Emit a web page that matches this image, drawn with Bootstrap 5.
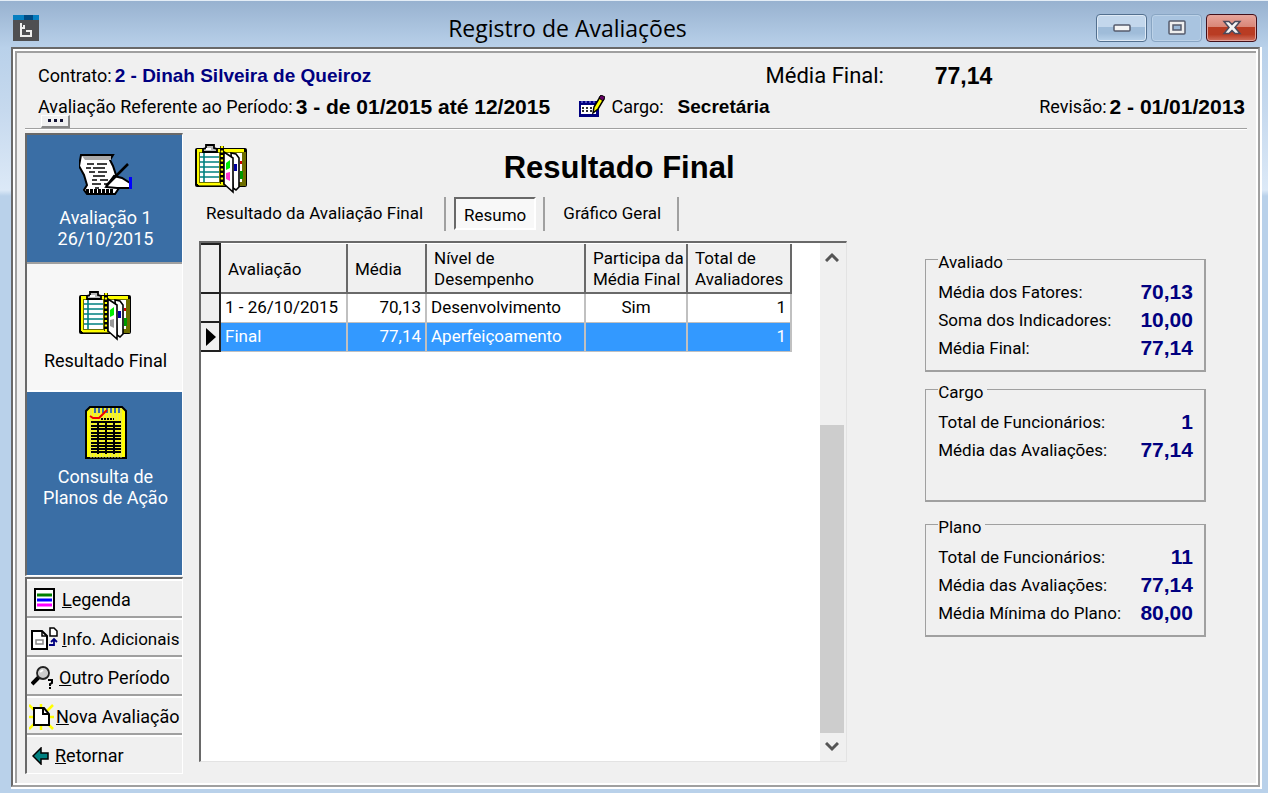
<!DOCTYPE html>
<html lang="pt-BR">
<head>
<meta charset="utf-8">
<meta name="viewport" content="width=device-width, initial-scale=1">
<title>Registro de Avaliações</title>
<link href="https://cdn.jsdelivr.net/npm/bootstrap@5.3.0/dist/css/bootstrap.min.css" rel="stylesheet">
<style>
:root{--face:#f0f0f0;--line:#a0a0a0;--dark:#696969;--navy:#000080;--side:#3a6ea5;--sel:#3399ff}
body{font-family:Roboto,"Liberation Sans",sans-serif;font-size:17px;line-height:20px;color:#000;background:linear-gradient(#97b1cf 0,#b9d1ea 48px,#c6d9ee 110px,#dce9f7 190px,#b9d1ea 196px)}
svg{display:block;flex:none}
b,h1{font-family:"Liberation Sans",sans-serif;font-weight:700}
.frame{min-height:100vh;padding:0 8px 6px 11px;border-top:1px solid #e4edf6}
.titlebar{height:46px;padding:0 3px 0 2px}
.appicon{margin-top:14px}
.caption{font-family:"Open Sans",sans-serif;font-size:23px;line-height:30px;padding-top:12px}
.winbtns{gap:4px;padding-top:13px}
.winbtn{width:51px;height:28px;padding:0;border:1px solid #53708f;border-radius:4px;box-shadow:inset 0 0 0 1px #dfeaf6;background:linear-gradient(#c3d7ec 0 46%,#9fbcd9 47% 70%,#b9d2ea);display:flex;align-items:center;justify-content:center}
.winbtn.dim{border-color:#88a5c3;box-shadow:inset 0 0 0 1px #bcd2e8;background:#a9c4e0}
.winbtn.shut{border-color:#43101a;box-shadow:inset 0 0 0 1px #e3a49c;background:linear-gradient(#e8a59b,#d98677 46%,#b93c23 47% 75%,#d1715f)}
.client{border:2px solid var(--dark);border-right-color:var(--line);border-bottom-color:var(--line);outline:2px solid #fff;outline-offset:-4px;background:var(--face);padding:2px;box-shadow:1px 1px 0 1px #fff}
.inner{border:2px solid var(--line);border-right:0;border-bottom:0;padding:10px 9px 9px 8px}
.heads{display:grid;grid-template-columns:540fr 187fr 169fr 310fr;align-content:start;padding:0 2px 0 13px;row-gap:5px;height:65px;font-size:18px}
.heads>div{line-height:26px;display:flex;align-items:center;white-space:nowrap;gap:3px}
.heads b{font-size:19px}
.heads .job{grid-column:span 2;gap:6px}
.heads .big{font-size:22px}
.heads .num,.grp dd{font-family:"Liberation Sans",sans-serif;font-weight:700;font-size:21px}
.heads .num.big{font-size:23px}
.navy{color:var(--navy)}
.dots{position:absolute;left:16px;top:52px;width:29px;height:13px;padding:0;border:1px solid #fff;border-right:2px solid #888;border-bottom:2px solid #888;background:var(--face);display:flex;align-items:center;justify-content:center}
.rule{height:2px;border-bottom:1px solid #fff;background:var(--line)}
.side{width:158px;padding-top:3px}
.sidebox{border:1px solid var(--line);border-top:2px solid var(--dark);border-left:2px solid var(--dark);border-right-color:#fff;border-bottom-color:#fff}
.tile{border:0;border-radius:0;border-bottom:2px solid var(--line);background:var(--side);color:#fff;width:100%;font-size:18px;line-height:21px;height:129px;padding:0 0 0 2px;display:flex;flex-direction:column;align-items:center;justify-content:flex-start}
.tile.on{background:#f7f7f7;color:#000;border-bottom-color:#fff;height:128px}
.tile.tall{height:auto;flex-grow:1;border:0}
.act{height:39px;width:100%;border:0;border-bottom:2px solid var(--line);border-top:2px solid #fff;background:var(--face);padding:2px 0 0 4px;display:flex;align-items:center;gap:6px;font-size:18px;line-height:20px;white-space:nowrap;text-align:left;color:#000}
.act.tight{font-size:17px;gap:4px}
.act:last-child{border-bottom:0;height:38px}
.main{padding:14px 0 12px 12px;display:grid;grid-template-columns:651fr 399fr;grid-template-rows:auto auto 1fr}
.htitle{font-size:31px;line-height:36px;padding:6px 0 0 143px;margin:0}
.tabs{height:34px;margin-top:3px}
.tabs button{border:0;background:none;color:#000;padding:0 21px 2px 11px;height:34px;border-right:2px solid var(--line);white-space:nowrap}
.tabs .on{background:#f8f8f8;border:2px solid var(--dark);border-right-color:#fff;border-bottom-color:#fff;padding:2px 8px 0;margin:0 7px 0 8px;height:33px}
.tabs .end{padding:0 16px 2px 18px}
.tabs .sep{width:2px;height:34px;background:var(--line)}
.sheet{margin:10px 0 0 4px;background:#fff;border:1px solid #e3e3e3;border-top:2px solid var(--dark);border-left:2px solid var(--dark);min-height:0}
.gridtab{table-layout:fixed;width:590px;border-collapse:collapse;line-height:21px}
.gridtab th{font-weight:400;background:var(--face);border:2px solid var(--dark);border-top:0;height:49px;padding:2px 0 0 7px;vertical-align:middle;white-space:nowrap}
.gridtab td{height:29px;padding:0 4px;border:1px solid silver;border-right-width:2px;white-space:nowrap}
.gridtab .ind,.gridtab tbody th{background:var(--face);border:2px solid #222;border-left:0;padding:0;height:29px}
.gridtab .cur td{background:var(--sel);color:#fff}
.c0{width:19px}.c1{width:127px}.c2{width:79px}.c3{width:159px}.c4{width:102px}.c5{width:104px}
.bar{width:26px;background:var(--face)}
.bar button{border:0;background:none;height:28px;width:24px;padding:0;display:flex;align-items:center;justify-content:center}
.track{flex:154}
.thumb{flex:307;width:24px;background:#cdcdcd}
.boxes{grid-row:1/4;grid-column:2;padding:102px 41px 0 78px}
.grp{border:2px solid var(--line);border-width:1px 2px 2px 1px;min-height:126px;padding:6px 11px 0 12px;margin:0 0 4px;min-width:0}
.grp.low{margin-bottom:9px}
.grp legend{font-size:17px;line-height:20px;padding:6px 4px 0 0;margin:0}
.grp dl{margin:0}
.grp dt,.grp dd{font-weight:400;line-height:28px;margin:0;white-space:nowrap}
.grp dd{font-weight:700;color:var(--navy)}
</style>
</head>
<body>
<svg width="0" height="0" class="position-absolute" aria-hidden="true">
  <symbol id="notebook" viewBox="0 0 53 50">
    <rect x="0" y="4" width="52" height="39" rx="2" fill="#000"/>
    <path d="M2 5h47v35H2z" fill="#ff0"/><path d="M4 8h47v34H4z" fill="#6e6e00"/><path d="M3 40h25" stroke="#ff0" stroke-width="2"/>
    <path d="M5 9h19v29H5zM31 9h16v29H31z" fill="#fff"/>
    <path d="M5 13h19M5 18h19M5 23h19M5 28h19M5 33h19M9 9v29" stroke="#008080" stroke-width="1.600"/>
    <path d="M8 8V5l3-1V1h8v3l3 1v3z" fill="#bbb" stroke="#000" stroke-width="1.800"/><path d="M11 5h5" stroke="#fff" stroke-width="2"/>
    <path d="M27 2v38" stroke="#000" stroke-width="4"/><path d="M27 2v38" stroke="#ff0" stroke-width="2.500" stroke-dasharray="2 2.500"/>
    <path d="M36 9l5 1 3 4v29l-3 3-3-2z" fill="#fff" stroke="#000" stroke-width="1.600"/>
    <path d="M29 8l9 6v34l-9-8z" fill="#fff" stroke="#000" stroke-width="1.600"/>
    <path d="M31 19l4-3v8l-4 2z" fill="#0e0"/><path d="M31 29l4-1v9l-4-2z" fill="currentColor"/><path d="M39 20h3v7h-3z" fill="#0000a0"/><path d="M45 17h2v3h-2z" fill="#c00"/><path d="M45 27h3v8h-3z" fill="#090"/>
  </symbol>
</svg>
<main class="frame d-flex flex-column">
  <header class="titlebar d-flex">
    <svg class="appicon" width="26" height="26" viewBox="0 0 26 26"><path d="M0 0h26v26H0z" fill="#4f4f52"/><path d="M0 0h26v5H0z" fill="#067ec0"/><path d="M11 0h9v5h-9z" fill="#004b84"/><path d="M8 8v13h10v-5h-5" fill="none" stroke="#eee" stroke-width="2"/><path d="M7 13h4v-3" fill="none" stroke="#eee" stroke-width="2"/></svg>
    <div class="caption flex-grow-1 text-center">Registro de Avaliações</div>
    <div class="winbtns d-flex">
      <button class="winbtn" aria-label="Minimizar"><svg width="18" height="8"><rect x="1" y="1" width="16" height="6" rx="1" fill="#f4f4f4" stroke="#555b6c" stroke-width="1.500"/></svg></button>
      <button class="winbtn dim" aria-label="Maximizar"><svg width="18" height="16"><rect x="1" y="1" width="16" height="13" rx="1" fill="#eee" stroke="#555b6c" stroke-width="1.500"/><rect x="5" y="5" width="8" height="5" fill="#9bb9d8" stroke="#555b6c" stroke-width="1.500"/></svg></button>
      <button class="winbtn shut" aria-label="Fechar"><svg width="20" height="16"><path d="M2 1.500h5l3 3 3-3h5l-5 6 5 6h-5l-3-3-3 3H2l5-6z" fill="#f4f4f4" stroke="#4b4a5c" stroke-width="1.500"/></svg></button>
    </div>
  </header>
  <section class="client flex-grow-1 d-flex flex-column">
    <div class="inner flex-grow-1 d-flex flex-column">
      <div class="position-relative">
        <div class="heads">
          <div>Contrato: <b class="navy">2 - Dinah Silveira de Queiroz</b></div>
          <div></div>
          <div class="big">Média Final:</div>
          <div><b class="num big">77,14</b></div>
          <div>Avaliação Referente ao Período: <b class="num">3 - de 01/2015 até 12/2015</b></div>
          <div class="job">
            <svg width="27" height="24" viewBox="0 0 27 24"><path d="M1 6h20v16H1z" fill="#000080"/><path d="M3 10h15v9H3z" fill="#fff"/><path d="M3 7h15" stroke="#99f" stroke-dasharray="2 2"/><path d="M4 13h13M4 16h13" stroke="#333" stroke-width="2" stroke-dasharray="2 2"/><path d="M15 18l1-6 6-10 4 2-6 10z" fill="#ff0" stroke="#000" stroke-width="1.500"/><path d="M21 3l2-3 4 2-2 4z" fill="#606" stroke="#000"/></svg>
            <span class="me-2">Cargo: </span><b>Secretária</b>
          </div>
          <div class="justify-content-end">Revisão:<b class="num">2 - 01/01/2013</b></div>
        </div>
        <button class="dots" aria-label="Selecionar período"><svg width="18" height="4"><path d="M2 0h3v3H2zM8 0h3v3H8zM14 0h3v3h-3z" fill="#113"/></svg></button>
      </div>
      <div class="rule"></div>
      <div class="d-flex flex-grow-1">
        <nav class="side flex-shrink-0 d-flex flex-column">
          <div class="sidebox flex-grow-1 d-flex flex-column">
            <button class="tile">
              <svg width="54" height="42" viewBox="0 0 54 42" style="margin:18px 0 12px"><path d="M2 2h32l-3 5 3 6 4 12 2 10-4 6H8l-3-4 3-5-3-10-5-9z" fill="#fff" stroke="#000" stroke-width="2"/><path d="M3 3h29v4H6z" fill="#aaa"/><path d="M8 11h7M18 11h10M7 15h5M14 15h12M10 19h6M19 19h9M14 23h12M13 27h5M21 27h8M13 31h9M25 31h6M16 35h4" stroke="#000" stroke-width="1.500"/><path d="M7 38h28" stroke="#000" stroke-width="4" stroke-dasharray="3 1"/><path d="M27 34l8-11 8 2 8 5v5H38z" fill="#fff" stroke="#000" stroke-width="2"/><path d="M27 33l22-22" stroke="#000" stroke-width="2.500"/><path d="M50 24h3v12h-3z" fill="#00f"/></svg>
              <span>Avaliação 1<br>26/10/2015</span>
            </button>
            <button class="tile on">
              <svg width="53" height="50" style="margin:27px 0 9px;color:#999"><use href="#notebook"/></svg>
              <span>Resultado Final</span>
            </button>
            <button class="tile tall">
              <svg width="42" height="53" viewBox="0 0 42 53" style="margin:14px 0 7px"><path d="M5 1h32l4 4v47H1V5z" fill="#ff0" stroke="#000" stroke-width="2"/><path d="M6 2v50M9 2v50M12 2v50M15 2v50M18 2v50M21 2v50M24 2v50M27 2v50M30 2v50M33 2v50M36 2v50" stroke="#d8d890" stroke-width="1"/><path d="M10 2v5M14 2v5M18 2v5M22 2v5M26 2v5M30 2v5M34 2v5" stroke="#3a6ea5" stroke-width="2"/><path d="M6 16h30M6 20h30M6 23h30M6 27h30M6 30h30M6 33h30M6 37h30M6 40h30M6 43h30M6 46h30" stroke="#000" stroke-width="1.800"/><path d="M13 15v33M21 15v33M29 15v33" stroke="#000" stroke-width="2"/><path d="M16 13h13" stroke="#000" stroke-width="2" stroke-dasharray="2 1"/><path d="M5 10l3 2h6l8-8" fill="none" stroke="#e00" stroke-width="2"/></svg>
              <span>Consulta de<br>Planos de Ação</span>
            </button>
          </div>
          <div class="sidebox" style="margin-top:1px">
            <button class="act" style="padding-left:7px"><svg width="22" height="24" viewBox="0 0 22 24"><path d="M1 1h19v21H1z" fill="#fff" stroke="#000" stroke-width="2"/><path d="M3 7h15" stroke="#008000" stroke-width="3"/><path d="M3 12h15" stroke="#00f" stroke-width="3"/><path d="M3 17h15" stroke="#f0f" stroke-width="3"/></svg><span><u>L</u>egenda</span></button>
            <button class="act tight"><svg width="27" height="24" viewBox="0 0 27 24"><path d="M1 4h10l5 5v13H1z" fill="#fff" stroke="#000" stroke-width="2"/><path d="M11 4v5h5" fill="none" stroke="#000" stroke-width="1.500"/><path d="M5 13h7v4H5z" fill="#fff" stroke="#888" stroke-width="1.500"/><path d="M19 1h4l3 3v5h-7z" fill="#fff" stroke="#000" stroke-width="1.500"/><path d="M18 18h5v-5M20 15l3-3 3 3" fill="none" stroke="#000080" stroke-width="1.800"/></svg><span><u>I</u>nfo. Adicionais</span></button>
            <button class="act"><svg width="22" height="24" viewBox="0 0 22 24"><path d="M1 18l7-7" stroke="#000" stroke-width="4"/><circle cx="12" cy="7" r="6" fill="#ccc" stroke="#222" stroke-width="1.800"/><path d="M9 6l3-2" stroke="#fff" stroke-width="2"/><path d="M17 14h4v3l-2 1v2M19 21v2" fill="none" stroke="#000" stroke-width="2"/></svg><span><u>O</u>utro Período</span></button>
            <button class="act" style="padding-left:2px;gap:2px"><svg width="25" height="26" viewBox="0 0 25 26"><path d="M0 1l24 24M24 1L0 25M12 0v4M0 13h5M20 13h5M12 21v5" stroke="#ff0" stroke-width="2.500"/><path d="M5 4h10l5 6v11H5z" fill="#fff" stroke="#000" stroke-width="2"/><path d="M14 4v6h6" fill="none" stroke="#000" stroke-width="2"/></svg><span><u>N</u>ova Avaliação</span></button>
            <button class="act" style="padding-left:5px"><svg width="17" height="18" viewBox="0 0 17 18"><path d="M1 9l8-8v5h7v6H9v5z" fill="#008080" stroke="#000" stroke-width="1.500"/></svg><span><u>R</u>etornar</span></button>
          </div>
        </nav>
        <section class="main flex-grow-1">
          <div class="d-flex">
            <svg width="53" height="50" style="color:#f3c"><use href="#notebook"/></svg>
            <h1 class="htitle flex-grow-1 text-center">Resultado Final</h1>
          </div>
          <div class="tabs d-flex" role="tablist">
            <button role="tab">Resultado da Avaliação Final</button>
            <button role="tab" class="on" aria-selected="true">Resumo</button>
            <div class="sep"></div>
            <button role="tab" class="end">Gráfico Geral</button>
          </div>
          <div class="sheet d-flex justify-content-between">
            <div>
            <table class="gridtab">
              <colgroup><col class="c0"><col class="c1"><col class="c2"><col class="c3"><col class="c4"><col class="c5"></colgroup>
              <thead><tr><th class="ind"></th><th>Avaliação</th><th>Média</th><th>Nível de<br>Desempenho</th><th>Participa da<br>Média Final</th><th>Total de<br>Avaliadores</th></tr></thead>
              <tbody>
                <tr><th></th><td>1 - 26/10/2015</td><td class="text-end">70,13</td><td>Desenvolvimento</td><td class="text-center">Sim</td><td class="text-end">1</td></tr>
                <tr class="cur"><th><svg width="12" height="18" class="ms-1"><path d="M1 0l10 9-10 9z"/></svg></th><td>Final</td><td class="text-end">77,14</td><td>Aperfeiçoamento</td><td></td><td class="text-end">1</td></tr>
              </tbody>
            </table>
            </div>
            <div class="bar d-flex flex-column">
              <button aria-label="Subir"><svg width="14" height="10"><path d="M1 9l6-6 6 6" fill="none" stroke="#555" stroke-width="3"/></svg></button>
              <div class="track"></div><div class="thumb"></div>
              <button aria-label="Descer"><svg width="14" height="10"><path d="M1 1l6 6 6-6" fill="none" stroke="#555" stroke-width="3"/></svg></button>
            </div>
          </div>
          <div class="boxes">
            <fieldset class="grp">
              <legend class="float-none w-auto">Avaliado</legend>
              <dl><div class="d-flex justify-content-between"><dt>Média dos Fatores:</dt><dd>70,13</dd></div><div class="d-flex justify-content-between"><dt>Soma dos Indicadores:</dt><dd>10,00</dd></div><div class="d-flex justify-content-between"><dt>Média Final:</dt><dd>77,14</dd></div></dl>
            </fieldset>
            <fieldset class="grp low">
              <legend class="float-none w-auto">Cargo</legend>
              <dl><div class="d-flex justify-content-between"><dt>Total de Funcionários:</dt><dd>1</dd></div><div class="d-flex justify-content-between"><dt>Média das Avaliações:</dt><dd>77,14</dd></div></dl>
            </fieldset>
            <fieldset class="grp">
              <legend class="float-none w-auto">Plano</legend>
              <dl><div class="d-flex justify-content-between"><dt>Total de Funcionários:</dt><dd>11</dd></div><div class="d-flex justify-content-between"><dt>Média das Avaliações:</dt><dd>77,14</dd></div><div class="d-flex justify-content-between"><dt>Média Mínima do Plano:</dt><dd>80,00</dd></div></dl>
            </fieldset>
          </div>
        </section>
      </div>
    </div>
  </section>
</main>
<script src="https://cdn.jsdelivr.net/npm/bootstrap@5.3.0/dist/js/bootstrap.bundle.min.js"></script>
</body>
</html>
